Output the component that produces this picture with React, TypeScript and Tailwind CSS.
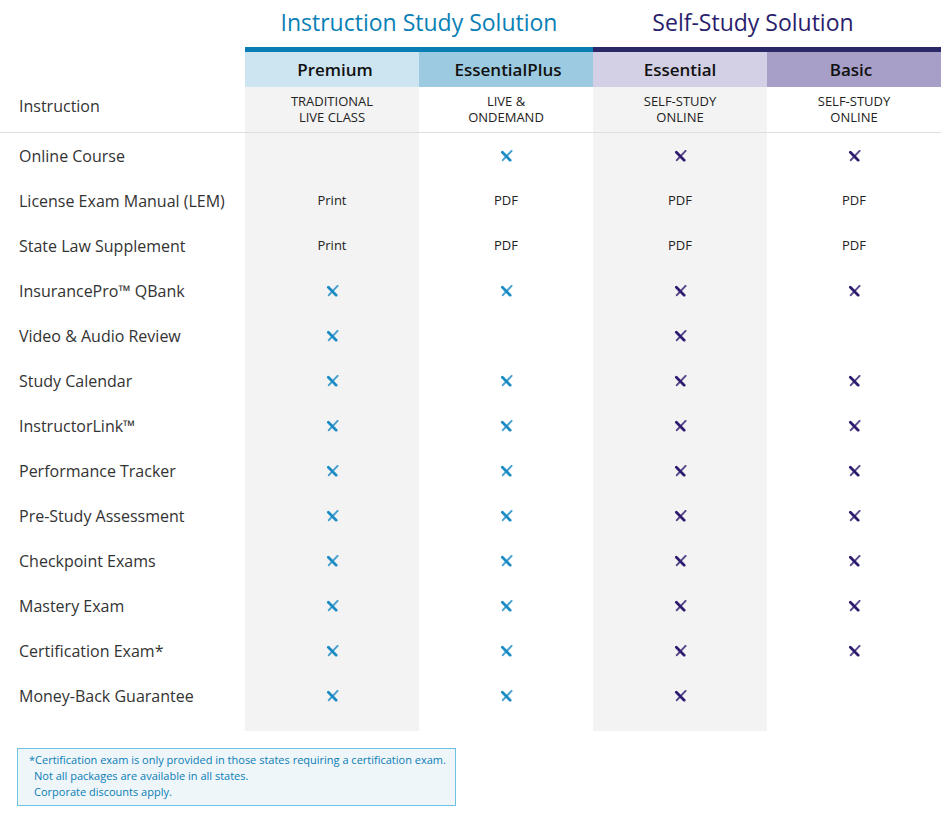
import React from "react"

type Cell = "x" | "" | string

const rows: { label: string; cells: Cell[] }[] = [
  { label: "Online Course", cells: ["", "x", "x", "x"] },
  { label: "License Exam Manual (LEM)", cells: ["Print", "PDF", "PDF", "PDF"] },
  { label: "State Law Supplement", cells: ["Print", "PDF", "PDF", "PDF"] },
  { label: "InsurancePro™ QBank", cells: ["x", "x", "x", "x"] },
  { label: "Video & Audio Review", cells: ["x", "", "x", ""] },
  { label: "Study Calendar", cells: ["x", "x", "x", "x"] },
  { label: "InstructorLink™", cells: ["x", "x", "x", "x"] },
  { label: "Performance Tracker", cells: ["x", "x", "x", "x"] },
  { label: "Pre-Study Assessment", cells: ["x", "x", "x", "x"] },
  { label: "Checkpoint Exams", cells: ["x", "x", "x", "x"] },
  { label: "Mastery Exam", cells: ["x", "x", "x", "x"] },
  { label: "Certification Exam*", cells: ["x", "x", "x", "x"] },
  { label: "Money-Back Guarantee", cells: ["x", "x", "x", ""] },
]

// column backgrounds: premium + essential are shaded
const colBg = ["bg-[#f3f3f3]", "bg-white", "bg-[#f3f3f3]", "bg-white"]

function Check({ color }: { color: string }) {
  return (
    <svg width="13" height="12" viewBox="0 0 14 13" fill="none">
      <path d="M2.5 2.5 L11 11" stroke={color} strokeWidth="3" strokeLinecap="round" />
      <path d="M12.5 1 L3 11" stroke={color} strokeWidth="2.2" strokeLinecap="round" opacity="0.8" />
    </svg>
  )
}

export default function App() {
  return (
    <div className="w-[942px] bg-white text-[#333] font-['Open_Sans',sans-serif]">
      {/* group titles */}
      <div className="grid grid-cols-[245px_348px_348px]">
        <div />
        <div className="h-[47px] flex items-center justify-center pb-[2px] text-[23px] text-[#0a7fb5]">
          Instruction Study Solution
        </div>
        <div className="h-[47px] flex items-center justify-center pb-[2px] pr-[28px] text-[23px] text-[#2a1e6c]">
          Self-Study Solution
        </div>
      </div>

      <div className="grid grid-cols-[245px_174px_174px_174px_174px]">
        {/* tier headers */}
        <div />
        <div className="col-span-2 h-[5px] bg-[#0a7db5]" />
        <div className="col-span-2 h-[5px] bg-[#2b2868]" />
        <div />
        <div className="h-[35px] flex items-center justify-center pl-[6px] bg-[#cde5f1] text-[17px] font-semibold text-[#111]">Premium</div>
        <div className="h-[35px] flex items-center justify-center pl-[4px] bg-[#9ccbe1] text-[17px] font-semibold text-[#111]">EssentialPlus</div>
        <div className="h-[35px] flex items-center justify-center bg-[#d3cfe4] text-[17px] font-semibold text-[#111]">Essential</div>
        <div className="h-[35px] flex items-center justify-center pr-[6px] bg-[#a79fc8] text-[17px] font-semibold text-[#111]">Basic</div>

        {/* instruction row */}
        <div className="h-[46px] flex items-center pl-[19px] pb-[8px] text-[16px] border-b border-[#dddddd]">Instruction</div>
        {["TRADITIONAL|LIVE CLASS", "LIVE &|ONDEMAND", "SELF-STUDY|ONLINE", "SELF-STUDY|ONLINE"].map((t, i) => (
          <div
            key={i}
            className={`h-[46px] flex flex-col items-center justify-center pb-[2px] text-[13px] leading-[16px] text-[#222] border-b border-[#dddddd] ${colBg[i]}`}
          >
            {t.split("|").map((l) => (
              <span key={l} className="block">{l}</span>
            ))}
          </div>
        ))}

        {rows.map((r) => (
          <React.Fragment key={r.label}>
            <div className="h-[45px] flex items-center pl-[19px] text-[16px]">{r.label}</div>
            {r.cells.map((c, i) => (
              <div key={i} className={`h-[45px] flex items-center justify-center text-[13px] text-[#222] ${colBg[i]}`}>
                {c === "x" ? <Check color={i < 2 ? "#1a8bc3" : "#2e1b70"} /> : c}
              </div>
            ))}
          </React.Fragment>
        ))}

        <div className="h-[13px]" />
        {colBg.map((b, i) => (
          <div key={i} className={`h-[13px] ${b}`} />
        ))}
      </div>

      <div className="pt-[17px] pl-[17px] pb-[20px]">
        <div className="w-[439px] border border-[#6cc3e3] bg-[#eef6fa] pl-[11px] pt-[3px] pb-[5px] text-[11px] leading-[16px] whitespace-nowrap text-[#0a7db5]">
          <div>*Certification exam is only provided in those states requiring a certification exam.</div>
          <div className="pl-[5px]">Not all packages are available in all states.</div>
          <div className="pl-[5px]">Corporate discounts apply.</div>
        </div>
      </div>
    </div>
  )
}
